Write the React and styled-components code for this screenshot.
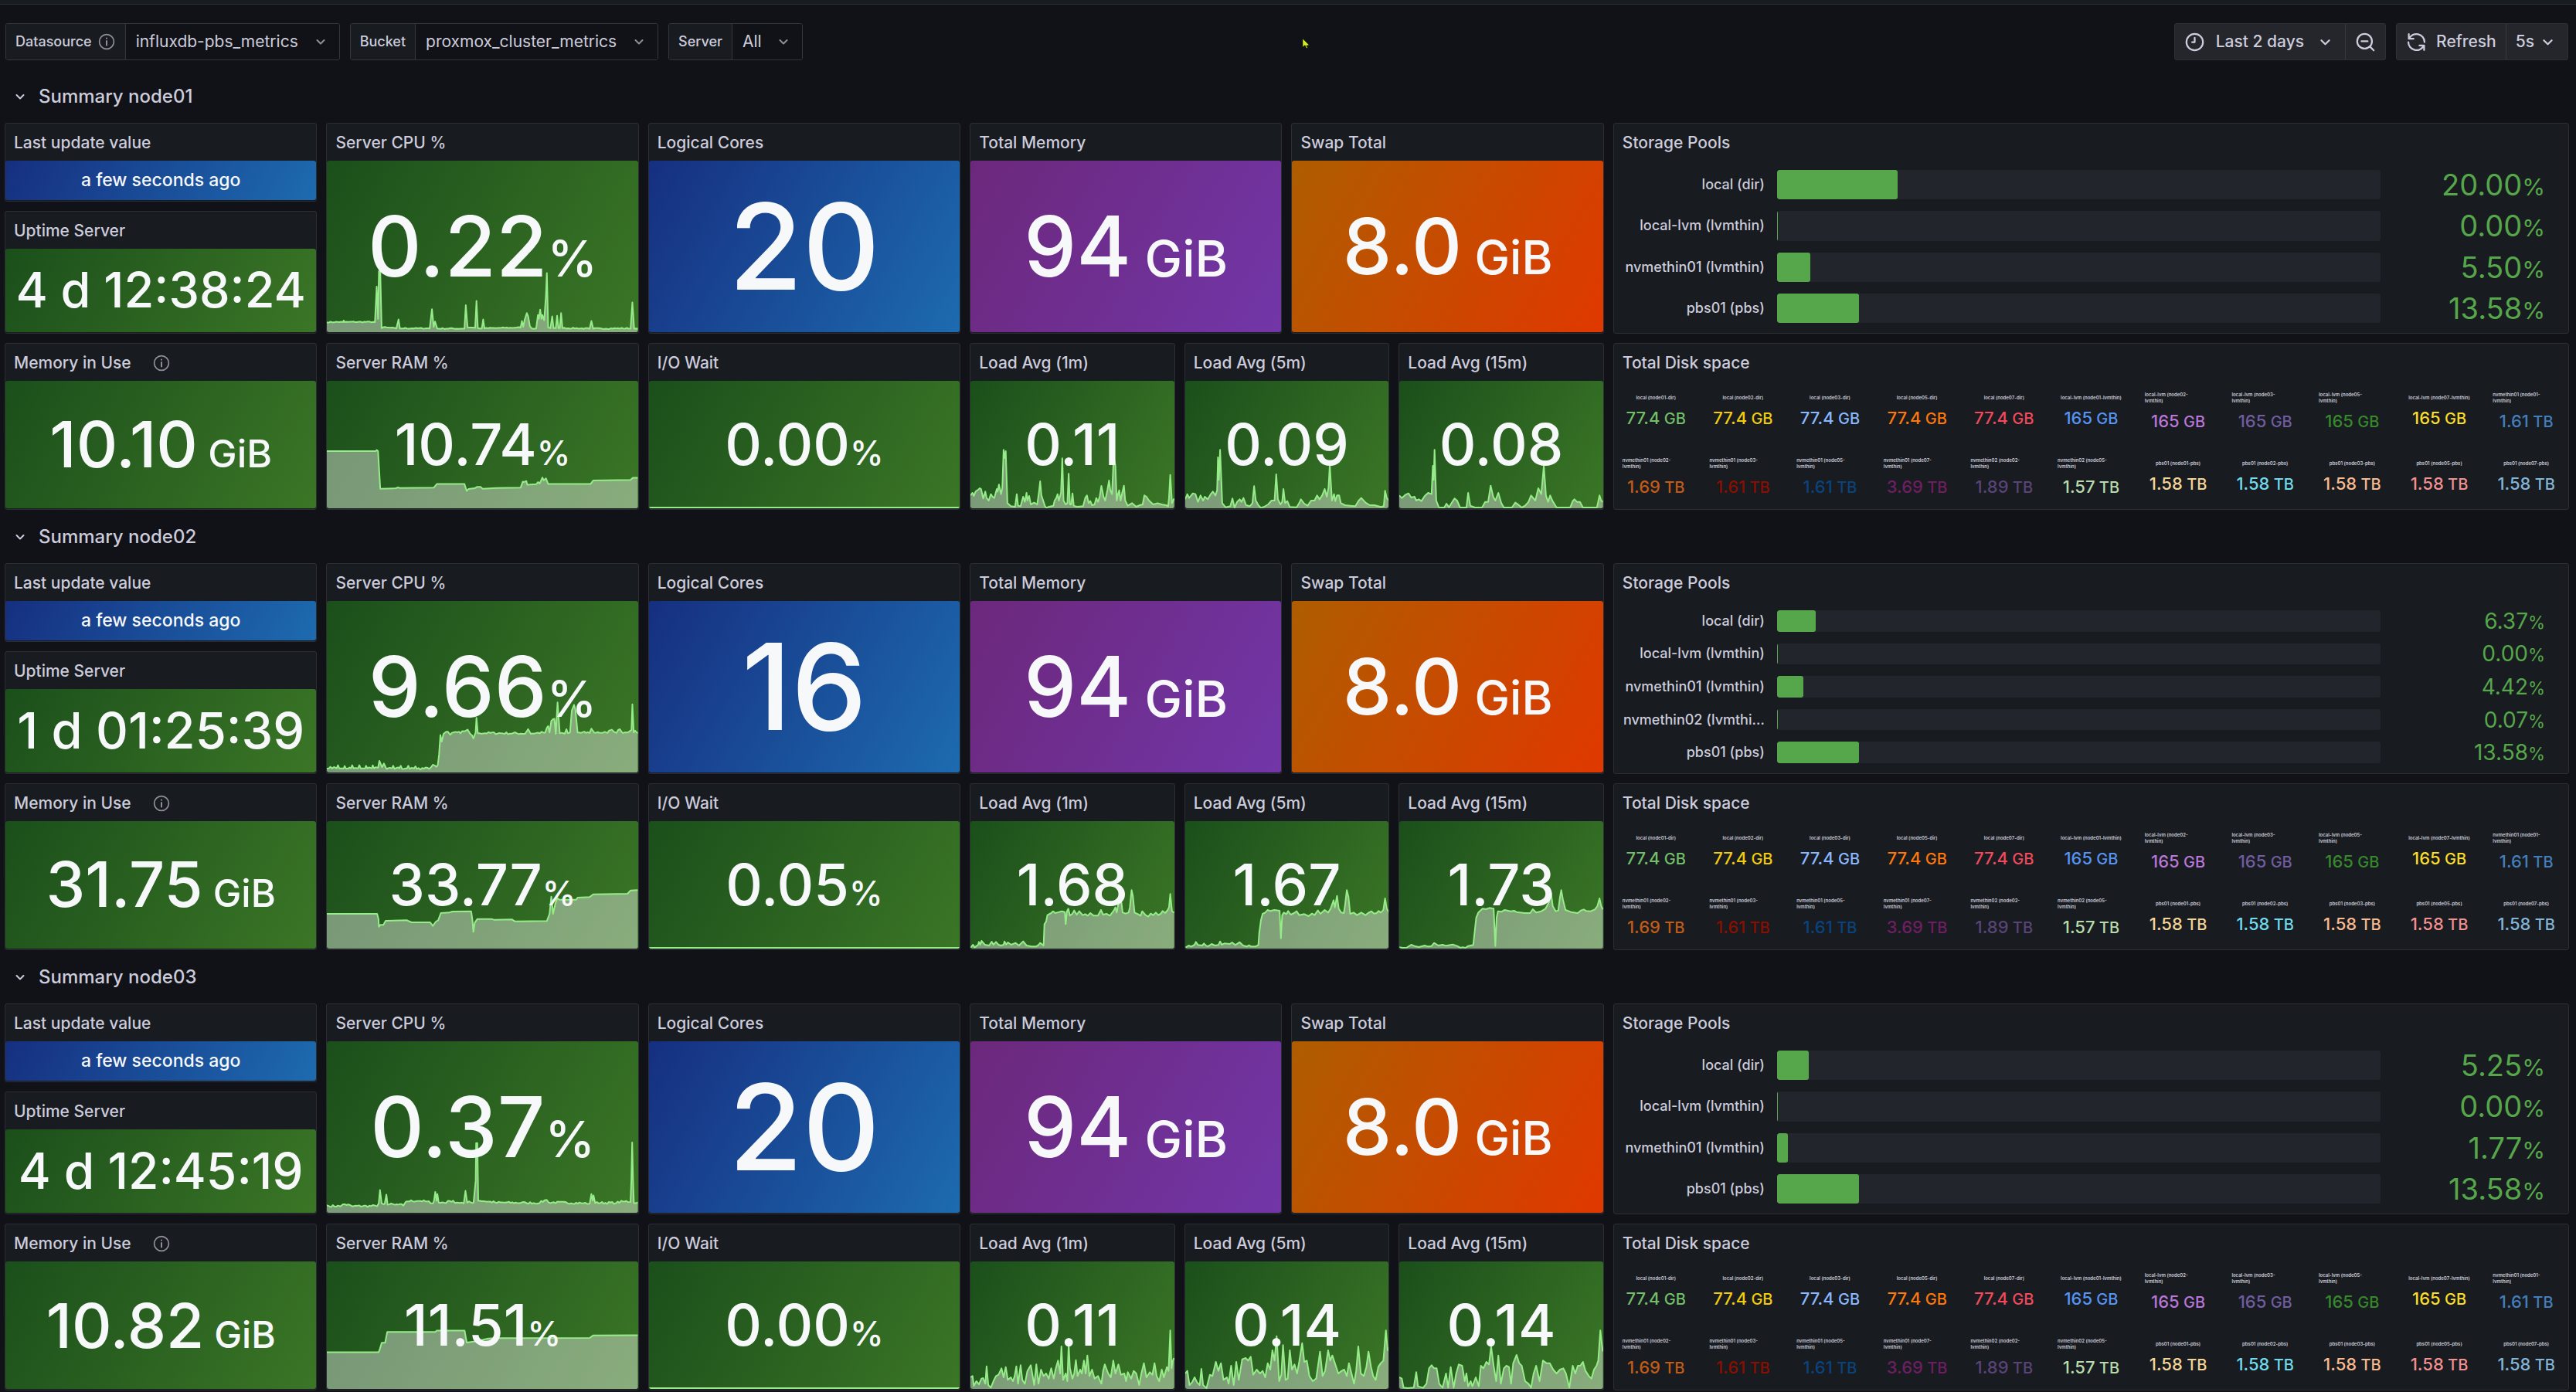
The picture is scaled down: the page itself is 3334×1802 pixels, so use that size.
import React from "react";
import styled, { createGlobalStyle } from "styled-components";

const GlobalStyle = createGlobalStyle`
  *, *::before, *::after { box-sizing: border-box; }
  body {
    margin: 0;
    background: #111217;
    color: #ccccdc;
    font-family: Inter, "Liberation Sans", sans-serif;
    font-size: 21px;
    line-height: 32px;
  }
  button, select { font: inherit; color: inherit; }
  h2, h3 { margin: 0; font-weight: 500; }
`;

/* ---------- icons ---------- */

const Svg = styled.svg`
  width: ${(p) => p.$size}px;
  height: ${(p) => p.$size}px;
  flex: none;
  display: block;
  fill: none;
  stroke: currentColor;
  stroke-width: 2;
  stroke-linecap: round;
  stroke-linejoin: round;
`;

const ChevronDown = ({ size = 24 }) => (
  <Svg $size={size} viewBox="0 0 24 24" aria-hidden="true">
    <path d="M7.5 10l4.5 4.5 4.5-4.5" />
  </Svg>
);

const InfoIcon = () => (
  <Svg $size={24} viewBox="0 0 24 24" aria-hidden="true">
    <circle cx="12" cy="12" r="9.4" strokeWidth="1.7" />
    <path d="M12 11v5.5M12 7.6v.2" />
  </Svg>
);

const ClockIcon = () => (
  <Svg $size={27} viewBox="0 0 24 24" aria-hidden="true">
    <circle cx="12" cy="12" r="9.5" />
    <path d="M12 7v5H9" />
  </Svg>
);

const ZoomOutIcon = () => (
  <Svg $size={27} viewBox="0 0 24 24" aria-hidden="true">
    <circle cx="11" cy="11" r="8.5" />
    <path d="M7.5 11h7M17.2 17.2l4.3 4.3" />
  </Svg>
);

const RefreshIcon = () => (
  <Svg $size={27} viewBox="0 0 24 24" aria-hidden="true">
    <path d="M3.2 2.8v5.4h5.4M3.6 8A9.3 9.3 0 0 1 21.3 12" />
    <path d="M20.8 21.2v-5.4h-5.4M20.4 16A9.3 9.3 0 0 1 2.7 12" />
  </Svg>
);

/* ---------- page frame ---------- */

const TopStrip = styled.div`
  height: 6px;
  background: #181b1f;
  border-bottom: 1px solid #2e3036;
`;

const Controls = styled.header`
  display: flex;
  justify-content: space-between;
  padding: 24px 10px 24px 7px;
`;

const ControlSet = styled.div`
  display: flex;
  gap: 13px;
`;

const Variable = styled.div`
  display: flex;
  height: 48px;
  border: 1px solid #34363c;
  border-radius: 3px;
  overflow: hidden;
`;

const VariableLabel = styled.label`
  display: flex;
  align-items: center;
  gap: 7px;
  padding: 0 12px;
  background: #181b1f;
  border-right: 1px solid #34363c;
  font-size: 18px;
  font-weight: 500;

  svg { color: #8e8f9a; }
`;

const SelectBox = styled.div`
  display: grid;
  align-items: center;

  > * { grid-area: 1 / 1; }
  svg { justify-self: end; margin-right: 12px; color: #8e8f9a; pointer-events: none; }
`;

const Select = styled.select`
  appearance: none;
  height: 100%;
  padding: 0 52px 0 13px;
  border: 0;
  background: #111217;
`;

const ButtonGroup = styled.div`
  display: flex;
  height: 48px;
  border: 1px solid #2e3035;
  border-radius: 3px;
  background: #24262b;
  overflow: hidden;
`;

const ToolButton = styled.button`
  display: flex;
  align-items: center;
  gap: ${(p) => p.$gap || 0}px;
  padding: 0 ${(p) => p.$pad}px;
  border: 0;
  background: none;
  font-weight: 500;

  & + & { border-left: 1px solid #36383e; }
`;

const Pointer = styled.svg`
  position: absolute;
  left: 1685px;
  top: 49px;
  width: 11px;
  height: 15px;
`;

/* ---------- dashboard grid ---------- */

const Dashboard = styled.main`
  display: grid;
  gap: 12px;
  padding: 0 9px 0 6px;
`;

const NodeSection = styled.section`
  display: grid;
  grid-template-columns: repeat(24, minmax(0, 1fr));
  grid-template-rows: 45px 273px 216px;
  gap: 12px;
`;

const RowTitle = styled.h2`
  grid-column: 1 / -1;
  display: flex;
  font-size: 24px;
`;

const RowToggle = styled.button`
  display: flex;
  align-items: center;
  gap: 12px;
  padding: 0 8px;
  border: 0;
  background: none;
  font-weight: 500;
`;

const Stack = styled.div`
  grid-column: span 3;
  display: grid;
  grid-template-rows: 102px 159px;
  gap: 12px;
`;

const PanelFrame = styled.article`
  grid-column: span ${(p) => p.$span || 1};
  display: flex;
  flex-direction: column;
  min-width: 0;
  min-height: 0;
  padding-bottom: 1px;
  background: #181b1f;
  border: 1px solid #2c2e33;
  border-radius: 3px;
`;

const PanelHeader = styled.div`
  display: flex;
  align-items: center;
  gap: 27px;
  flex: none;
  height: 48px;
  padding: 2px 11px 0;

  svg { color: #8e8f9a; }
`;

const PanelTitle = styled.h3`
  font-size: 21px;
`;

const Panel = ({ title, span, info, children }) => (
  <PanelFrame $span={span}>
    <PanelHeader>
      <PanelTitle>{title}</PanelTitle>
      {info && <InfoIcon />}
    </PanelHeader>
    {children}
  </PanelFrame>
);

/* ---------- stat panels ---------- */

const gradients = {
  green: "#1b4f1b, #3b7626",
  blue: "#162f80, #1d6bb0",
  purple: "#6c287b, #7236a8",
  orange: "#ae5d00, #e03800",
};

const StatArea = styled.div`
  flex: 1;
  min-height: 0;
  display: grid;
  grid-template: minmax(0, 1fr) / minmax(0, 1fr);
  border-radius: 3px;
  overflow: hidden;
  background: linear-gradient(120deg, ${(p) => gradients[p.$tone]});

  > * { grid-area: 1 / 1; }
`;

const StatValue = styled.div`
  z-index: 1;
  place-self: center;
  color: #f7f8fa;
  font-size: ${(p) => p.$size}px;
  font-weight: 500;
  line-height: 1.2;
  white-space: pre;
`;

const StatUnit = styled.span`
  font-size: ${(p) => p.$size}px;
`;

const SparkSvg = styled.svg`
  width: 100%;
  height: 100%;
  display: block;
`;

/* Each series is "x,height x,height ..." measured from the bottom-left of a w × h box. */
const Sparkline = ({ w, h, noise = 0, data }) => {
  const anchors = data.trim().split(/\s+/).map((p) => p.split(",").map(Number));
  const pts = [];
  let seed = 7;
  const rand = () => {
    seed = (seed * 16807) % 2147483647;
    return seed / 2147483647 - 0.35;
  };
  anchors.forEach(([x, v], i) => {
    pts.push([x, v]);
    const next = anchors[i + 1];
    if (!next || !noise) return;
    for (let s = x + 4; s < next[0] - 2; s += 4) {
      const base = v + ((next[1] - v) * (s - x)) / (next[0] - x);
      pts.push([s, Math.max(2, base + rand() * noise)]);
    }
  });
  const line = pts.map(([x, v]) => `${x.toFixed(1)} ${(h - v).toFixed(1)}`).join("L");
  return (
    <SparkSvg viewBox={`0 0 ${w} ${h}`} preserveAspectRatio="none" aria-hidden="true">
      <path d={`M0 ${h}L${line}L${w} ${h}Z`} fill="#fff" fillOpacity="0.4" />
      <path
        d={`M${line}`}
        fill="none"
        stroke="#96ec88"
        strokeWidth="2"
        strokeLinejoin="round"
        vectorEffect="non-scaling-stroke"
      />
    </SparkSvg>
  );
};

const Stat = ({ tone = "green", size, unit, unitSize, spark, children }) => (
  <StatArea $tone={tone}>
    {spark && <Sparkline {...spark} />}
    <StatValue $size={size}>
      {children}
      {unit && <StatUnit $size={unitSize}>{unit}</StatUnit>}
    </StatValue>
  </StatArea>
);

/* ---------- storage pools ---------- */

const PoolList = styled.div`
  flex: 1;
  min-height: 0;
  display: grid;
  grid-auto-rows: minmax(0, 1fr);
  gap: 15px;
  padding: 12px 11px;
`;

const PoolRow = styled.div`
  display: grid;
  grid-template-columns: 184px minmax(0, 1fr) 232px;
  grid-template-rows: minmax(0, 1fr);
  align-items: center;
`;

const PoolName = styled.span`
  overflow: hidden;
  text-overflow: ellipsis;
  white-space: nowrap;
  text-align: right;
  font-size: 18px;
  font-weight: 500;
  line-height: 24px;
`;

const PoolTrack = styled.div`
  height: 100%;
  margin-left: 16px;
  border-radius: 3px;
  background: #22252b;
  overflow: hidden;
`;

const PoolFill = styled.div`
  height: 100%;
  min-width: 1px;
  border-radius: 3px;
  background: #56a64b;
`;

const PoolValue = styled.span`
  padding-right: 19px;
  text-align: right;
  color: #56a64b;
  font-size: ${(p) => p.$size}px;
  line-height: 1;

  small { font-size: 0.8em; }
`;

const StoragePools = ({ pools }) => (
  <PoolList>
    {pools.map(([name, value]) => (
      <PoolRow key={name}>
        <PoolName>{name}</PoolName>
        <PoolTrack>
          <PoolFill style={{ width: `${value}%` }} />
        </PoolTrack>
        <PoolValue $size={pools.length > 4 ? 28 : 38}>
          {value}
          <small>%</small>
        </PoolValue>
      </PoolRow>
    ))}
  </PoolList>
);

/* ---------- total disk space ---------- */

const DiskGrid = styled.div`
  flex: 1;
  min-height: 0;
  display: grid;
  grid-template-columns: repeat(11, minmax(0, 1fr));
  grid-auto-rows: minmax(0, 1fr);
  gap: 4px;
`;

const DiskCell = styled.div`
  display: flex;
  flex-direction: column;
  align-items: center;
  justify-content: center;
  gap: 9px;
  padding: 0 11px;
`;

const DiskName = styled.span`
  align-self: ${(p) => (p.$wrapped ? "stretch" : "center")};
  font-size: 6px;
  line-height: 8px;
  font-weight: 600;
  white-space: pre;
`;

const DiskValue = styled.span`
  color: ${(p) => p.$color};
  font-size: 22px;
  line-height: 26px;
  font-weight: 500;
  white-space: pre;

  small { font-size: 20px; }
`;

const disks = [
  ["local (node01-dir)", "77.4", "GB", "#73bf69"],
  ["local (node02-dir)", "77.4", "GB", "#f2cc0c"],
  ["local (node03-dir)", "77.4", "GB", "#8ab8ff"],
  ["local (node05-dir)", "77.4", "GB", "#ff780a"],
  ["local (node07-dir)", "77.4", "GB", "#f2495c"],
  ["local-lvm (node01-lvmthin)", "165", "GB", "#5794f2"],
  ["local-lvm (node02-\nlvmthin)", "165", "GB", "#b877d9"],
  ["local-lvm (node03-\nlvmthin)", "165", "GB", "#705da0"],
  ["local-lvm (node05-\nlvmthin)", "165", "GB", "#37872d"],
  ["local-lvm (node07-lvmthin)", "165", "GB", "#fade2a"],
  ["nvmethin01 (node01-\nlvmthin)", "1.61", "TB", "#447ebc"],
  ["nvmethin01 (node02-\nlvmthin)", "1.69", "TB", "#c15c17"],
  ["nvmethin01 (node03-\nlvmthin)", "1.61", "TB", "#890f02"],
  ["nvmethin01 (node05-\nlvmthin)", "1.61", "TB", "#0a437c"],
  ["nvmethin01 (node07-\nlvmthin)", "3.69", "TB", "#6d1f62"],
  ["nvmethin02 (node02-\nlvmthin)", "1.89", "TB", "#584477"],
  ["nvmethin02 (node05-\nlvmthin)", "1.57", "TB", "#b7dbab"],
  ["pbs01 (node01-pbs)", "1.58", "TB", "#f4d598"],
  ["pbs01 (node02-pbs)", "1.58", "TB", "#70dbed"],
  ["pbs01 (node03-pbs)", "1.58", "TB", "#f9ba8f"],
  ["pbs01 (node05-pbs)", "1.58", "TB", "#f29191"],
  ["pbs01 (node07-pbs)", "1.58", "TB", "#82b5d8"],
];

const DiskSpace = () => (
  <DiskGrid>
    {disks.map(([name, value, unit, color]) => (
      <DiskCell key={name}>
        <DiskName $wrapped={name.includes("\n")}>{name}</DiskName>
        <DiskValue $color={color}>
          {value}
          <small> {unit}</small>
        </DiskValue>
      </DiskCell>
    ))}
  </DiskGrid>
);

/* ---------- data ---------- */

const idle = { w: 100, h: 167, data: "0,1 100,1" };

const nodes = [
  {
    name: "node01",
    uptime: "4 d 12:38:24",
    uptimeSize: 63,
    cores: "20",
    cpu: "0.22",
    ram: "10.74",
    mem: "10.10",
    memSize: 83,
    io: "0.00",
    load: ["0.11", "0.09", "0.08"],
    pools: [
      ["local (dir)", "20.00"],
      ["local-lvm (lvmthin)", "0.00"],
      ["nvmethin01 (lvmthin)", "5.50"],
      ["pbs01 (pbs)", "13.58"],
    ],
    cpuSpark: {
      w: 698, h: 647, noise: 4,
      data: `0,37 36,38 38,44 40,38 108,38 112,172 115,50 117,230 120,230 123,15 126,18 156,14 161,48 164,14
        231,14 236,87 240,20 243,40 248,13 309,13 312,102 316,18 333,16 336,118 339,15 348,14 351,48 354,14
        380,15 435,17 438,42 441,20 444,46 449,72 452,60 456,22 460,14 470,14 474,65 476,50 479,85 482,50
        484,65 488,45 492,140 494,223 497,18 502,15 506,60 509,15 514,15 517,62 520,15 523,15 526,72 529,15
        590,13 594,42 598,13 682,14 686,112 690,13 698,13`,
    },
    ramSpark: {
      w: 698, h: 477,
      data: `0,214 110,214 112,218 115,214 120,73 155,75 160,78 164,76 240,77 247,91 309,91 314,65 318,72 332,75
        337,80 345,80 350,73 380,76 435,77 440,100 442,98 448,102 450,88 470,90 474,98 478,93 484,115 487,105
        492,112 497,91 592,91 598,104 682,106 687,114 698,114`,
    },
    loadSpark: [
      `0,50 5,60 8,48 12,65 18,72 22,78 25,75 30,38 35,65 38,40 43,30 48,55 52,45 56,40 62,75 64,65 67,92 72,55
        75,80 78,227 80,195 83,222 87,20 95,8 105,6 109,55 112,10 118,8 124,45 128,25 132,60 134,30 138,48 142,15
        150,22 157,15 161,60 164,105 167,50 170,35 175,10 178,2 185,6 195,10 198,30 202,40 205,55 208,30 213,60
        216,194 219,30 224,15 228,20 231,134 234,15 237,15 240,58 243,10 250,6 265,8 270,40 274,50 278,20 282,28
        286,12 292,15 296,40 300,25 304,45 308,87 313,45 317,30 322,70 326,108 329,70 333,55 337,200 341,165
        344,30 347,55 350,70 353,30 357,60 361,88 364,30 370,10 380,20 390,6 398,12 405,15 409,50 414,45 420,30
        430,15 440,20 450,15 460,12 465,8 467,40 470,130 474,20 477,30 479,38`,
      `0,35 5,55 9,40 18,58 24,55 30,25 36,50 42,30 46,45 53,35 60,55 65,65 71,50 75,70 77,198 79,110 82,227
        87,20 95,4 106,8 111,38 116,3 122,25 128,35 132,25 137,40 143,12 152,8 158,20 162,86 166,30 172,12 178,2
        186,6 195,15 203,30 210,30 214,132 218,35 224,15 228,25 231,75 235,20 240,28 246,5 262,4 268,20 272,35
        280,18 288,10 296,30 304,30 310,50 316,35 322,50 328,75 333,45 337,80 340,170 345,30 350,55 353,28
        357,50 362,50 366,20 376,12 388,10 400,8 408,30 414,40 424,22 434,12 445,12 460,5 467,8 470,68 474,40
        479,30`,
      `0,50 6,40 14,52 22,58 28,42 36,45 40,30 46,35 52,28 60,48 68,60 76,55 79,165 81,110 83,227 87,30 93,4
        106,3 111,18 117,4 123,20 130,38 136,30 143,3 158,3 162,60 167,10 178,3 195,4 202,25 209,25 215,88
        221,45 226,30 233,60 240,20 246,3 265,3 273,22 280,14 288,3 296,10 304,25 310,50 320,30 327,78 334,55
        340,165 345,50 350,25 355,50 360,30 370,3 402,3 408,28 412,35 418,25 425,25 432,3 465,3 471,50 475,30
        479,25`,
    ],
  },
  {
    name: "node02",
    uptime: "1 d 01:25:39",
    uptimeSize: 65,
    cores: "16",
    cpu: "9.66",
    ram: "33.77",
    mem: "31.75",
    memSize: 81,
    io: "0.05",
    load: ["1.68", "1.67", "1.73"],
    pools: [
      ["local (dir)", "6.37"],
      ["local-lvm (lvmthin)", "0.00"],
      ["nvmethin01 (lvmthin)", "4.42"],
      ["nvmethin02 (lvmthi…", "0.07"],
      ["pbs01 (pbs)", "13.58"],
    ],
    cpuSpark: {
      w: 698, h: 665, noise: 9,
      data: `0,15 8,22 12,16 22,16 25,28 28,16 38,16 40,25 43,16 54,16 57,28 60,16 70,16 73,28 76,16 86,16 88,26
        91,16 101,16 103,28 106,16 115,18 118,45 124,20 128,35 134,14 146,16 149,26 152,14 163,16 166,26 169,14
        180,16 183,26 186,14 196,16 199,24 202,14 230,14 238,30 246,22 249,28 252,70 255,145 258,120 262,150
        268,158 277,146 285,156 300,152 316,166 322,150 329,132 334,155 336,212 339,152 445,150 452,168 458,150
        490,154 497,180 500,155 504,200 511,208 514,150 518,272 523,152 534,150 538,168 541,152 546,155 550,240
        555,262 558,245 563,155 570,153 590,153 594,170 600,155 630,153 640,166 650,153 658,168 665,153 680,160
        684,165 686,264 689,155 692,162 698,152`,
    },
    ramSpark: {
      w: 698, h: 495,
      data: `0,135 113,135 116,115 117,85 120,92 127,92 132,108 180,110 190,102 232,102 238,88 245,105 250,110
        256,138 275,140 282,144 324,145 327,110 329,65 332,100 338,115 370,115 375,112 416,113 422,106 494,107
        500,135 504,202 508,135 513,175 518,196 522,190 560,190 563,198 590,200 598,211 675,213 682,226 698,227`,
    },
    loadSpark: [
      `0,3 6,15 10,5 18,15 20,26 23,15 26,30 34,15 44,12 50,27 54,15 60,26 66,15 72,12 78,15 80,28 84,16 88,24
        96,15 106,22 114,12 124,28 132,12 144,8 154,8 160,14 164,22 172,12 174,95 178,105 181,130 190,138
        194,145 200,138 208,142 215,145 222,142 224,95 227,145 230,155 234,128 240,136 244,148 250,132 256,145
        264,130 270,134 276,128 282,138 290,128 300,128 307,150 312,132 320,135 328,128 336,145 341,160 344,140
        348,175 355,180 358,140 365,136 372,140 375,160 379,227 382,205 386,140 394,134 400,128 404,145 412,130
        418,124 424,136 430,130 436,140 442,130 448,136 452,146 458,138 464,150 467,160 470,212 474,145 479,140`,
      `0,3 8,12 14,8 22,15 25,26 30,14 40,12 44,20 50,10 55,10 62,18 70,12 78,14 82,28 86,15 92,20 105,18 110,24
        118,14 128,25 136,12 145,8 150,13 155,8 165,8 172,14 174,60 178,110 182,135 188,140 194,150 200,146
        210,150 222,147 225,40 228,130 232,140 238,134 242,146 248,132 256,138 262,145 268,130 280,134 290,126
        298,136 304,130 312,148 318,135 328,150 336,140 342,155 349,188 352,160 357,205 361,155 367,140 373,138
        376,170 380,227 384,200 388,135 396,140 404,130 414,140 424,130 430,138 438,145 444,136 450,138 455,146
        460,140 466,150 470,195 474,155 479,140`,
      `0,5 8,3 18,4 28,15 36,10 46,6 60,12 68,8 76,10 82,22 92,12 102,15 110,11 126,16 136,10 144,3 148,5 156,3
        162,10 174,14 177,60 181,120 186,140 196,155 204,153 212,158 222,155 226,10 229,120 232,145 240,143
        248,150 262,145 270,147 276,142 295,138 308,138 314,153 322,140 334,145 344,155 352,180 357,215 361,165
        368,145 374,148 378,200 381,227 385,190 391,150 404,142 420,138 427,148 434,152 440,146 450,145 460,152
        466,165 471,195 475,165 479,152`,
    ],
  },
  {
    name: "node03",
    uptime: "4 d 12:45:19",
    uptimeSize: 64,
    cores: "20",
    cpu: "0.37",
    ram: "11.51",
    mem: "10.82",
    memSize: 80,
    io: "0.00",
    load: ["0.11", "0.14", "0.14"],
    pools: [
      ["local (dir)", "5.25"],
      ["local-lvm (lvmthin)", "0.00"],
      ["nvmethin01 (lvmthin)", "1.77"],
      ["pbs01 (pbs)", "13.58"],
    ],
    cpuSpark: {
      w: 731, h: 640, noise: 8,
      data: `0,28 6,24 32,24 38,32 60,24 118,24 122,35 125,85 129,35 136,33 140,68 143,30 160,30 180,27 186,42
        220,44 250,36 252,45 255,78 258,45 260,70 263,38 280,36 285,45 305,38 322,35 326,82 330,38 345,38
        350,120 351,260 354,260 356,45 400,37 470,36 500,36 517,48 522,38 600,35 618,34 622,70 625,45 627,65
        631,36 680,36 700,42 714,40 716,120 718,262 720,120 722,36 731,38`,
    },
    ramSpark: {
      w: 731, h: 475,
      data: `0,137 122,137 125,150 129,172 137,172 142,212 255,212 258,217 324,217 327,190 329,173 345,176 380,188
        400,189 618,190 626,199 731,200`,
    },
    loadSpark: [
      `0,45 5,50 8,12 14,30 20,18 26,40 30,42 35,20 38,88 42,15 48,5 54,30 60,50 66,55 73,80 78,45 83,85 88,35
        95,45 100,30 104,50 108,88 112,20 118,92 122,35 128,20 134,70 142,92 150,15 155,95 160,20 166,75 172,50
        178,60 184,40 190,80 196,40 200,75 206,110 211,60 214,165 218,35 224,60 228,30 231,175 234,80 240,40
        244,60 248,112 252,50 258,75 262,60 267,110 271,60 275,130 280,50 286,75 292,40 300,50 308,20 312,70
        316,95 324,60 330,45 336,110 341,60 348,95 354,55 362,60 366,30 370,65 378,40 384,70 390,60 397,15
        402,60 408,100 414,45 422,65 428,55 433,100 438,50 444,30 450,75 455,45 462,85 466,70 470,227 473,80
        476,110 479,120`,
      `0,60 5,70 10,15 16,25 22,45 28,25 34,15 38,78 42,15 50,3 58,55 64,50 72,105 78,70 84,100 90,35 98,45
        102,20 108,90 114,15 120,105 126,35 134,115 142,120 148,110 154,125 160,55 168,75 176,60 182,70 188,45
        194,100 200,75 205,150 210,110 215,205 221,30 226,55 230,170 236,35 241,40 246,150 251,75 257,95 263,60
        268,105 275,178 280,105 286,110 292,50 300,30 308,40 317,145 323,50 329,70 336,150 341,110 346,130
        354,90 360,60 368,70 374,75 380,50 385,100 391,60 397,20 402,70 407,165 413,60 420,50 426,85 431,145
        437,85 442,50 448,35 454,85 460,100 466,110 472,227 476,150 479,160`,
      `0,45 6,40 10,5 20,3 34,5 40,65 44,10 56,4 64,20 70,80 76,92 82,80 88,80 94,20 102,5 110,60 115,5 121,85
        128,5 134,60 140,95 148,90 154,30 158,60 162,10 168,30 172,10 180,45 187,10 192,90 198,80 205,105 211,95
        216,165 222,90 228,30 233,130 239,20 246,80 252,90 258,85 263,20 268,100 276,132 282,100 288,90 296,30
        304,20 310,5 316,60 322,90 330,30 338,110 346,100 354,100 362,75 370,60 378,75 386,80 392,60 400,5
        408,90 414,60 420,90 426,90 432,105 438,70 446,50 452,40 458,75 464,90 468,110 473,227 476,180 479,145`,
    ],
  },
];

const loadTitles = ["Load Avg (1m)", "Load Avg (5m)", "Load Avg (15m)"];

/* ---------- assembly ---------- */

const VariablePicker = ({ id, label, value, info }) => (
  <Variable>
    <VariableLabel htmlFor={id}>
      {label}
      {info && <InfoIcon />}
    </VariableLabel>
    <SelectBox>
      <Select id={id} defaultValue={value}>
        <option>{value}</option>
      </Select>
      <ChevronDown />
    </SelectBox>
  </Variable>
);

const NodeSummary = ({ node }) => (
  <NodeSection>
    <RowTitle>
      <RowToggle type="button" aria-expanded="true">
        <ChevronDown />
        Summary {node.name}
      </RowToggle>
    </RowTitle>

    <Stack>
      <Panel title="Last update value">
        <Stat tone="blue" size={23}>a few seconds ago</Stat>
      </Panel>
      <Panel title="Uptime Server">
        <Stat size={node.uptimeSize}>{node.uptime}</Stat>
      </Panel>
    </Stack>
    <Panel title="Server CPU %" span={3}>
      <Stat size={108} unit="%" unitSize={65} spark={node.cpuSpark}>{node.cpu}</Stat>
    </Panel>
    <Panel title="Logical Cores" span={3}>
      <Stat tone="blue" size={155}>{node.cores}</Stat>
    </Panel>
    <Panel title="Total Memory" span={3}>
      <Stat tone="purple" size={108} unit=" GiB" unitSize={65}>94</Stat>
    </Panel>
    <Panel title="Swap Total" span={3}>
      <Stat tone="orange" size={101} unit=" GiB" unitSize={61}>8.0</Stat>
    </Panel>
    <Panel title="Storage Pools" span={9}>
      <StoragePools pools={node.pools} />
    </Panel>

    <Panel title="Memory in Use" span={3} info>
      <Stat size={node.memSize} unit=" GiB" unitSize={Math.round(node.memSize * 0.6)}>{node.mem}</Stat>
    </Panel>
    <Panel title="Server RAM %" span={3}>
      <Stat size={74} unit="%" unitSize={44} spark={node.ramSpark}>{node.ram}</Stat>
    </Panel>
    <Panel title="I/O Wait" span={3}>
      <Stat size={74} unit="%" unitSize={44} spark={idle}>{node.io}</Stat>
    </Panel>
    {loadTitles.map((title, i) => (
      <Panel key={title} title={title} span={2}>
        <Stat size={74} spark={{ w: 479, h: 495, data: node.loadSpark[i] }}>{node.load[i]}</Stat>
      </Panel>
    ))}
    <Panel title="Total Disk space" span={9}>
      <DiskSpace />
    </Panel>
  </NodeSection>
);

export default function App() {
  return (
    <>
      <GlobalStyle />
      <TopStrip />
      <Controls>
        <ControlSet>
          <VariablePicker id="datasource" label="Datasource" value="influxdb-pbs_metrics" info />
          <VariablePicker id="bucket" label="Bucket" value="proxmox_cluster_metrics" />
          <VariablePicker id="server" label="Server" value="All" />
        </ControlSet>
        <ControlSet>
          <ButtonGroup>
            <ToolButton type="button" $pad={12} $gap={14}>
              <ClockIcon />
              Last 2 days
              <ChevronDown size={27} />
            </ToolButton>
            <ToolButton type="button" $pad={12} aria-label="Zoom out">
              <ZoomOutIcon />
            </ToolButton>
          </ButtonGroup>
          <ButtonGroup>
            <ToolButton type="button" $pad={12} $gap={12}>
              <RefreshIcon />
              Refresh
            </ToolButton>
            <ToolButton type="button" $pad={12} $gap={4} aria-label="Refresh interval 5s">
              5s
              <ChevronDown size={27} />
            </ToolButton>
          </ButtonGroup>
        </ControlSet>
      </Controls>
      <Dashboard>
        {nodes.map((node) => (
          <NodeSummary key={node.name} node={node} />
        ))}
      </Dashboard>
      <Pointer viewBox="0 0 11 15" aria-hidden="true">
        <path d="M1 1v11l3-2.4 1.8 4 1.6-.8L5.8 10 9.5 9.4z" fill="#d4f01c" stroke="#1a1d10" strokeWidth="0.6" />
      </Pointer>
    </>
  );
}
